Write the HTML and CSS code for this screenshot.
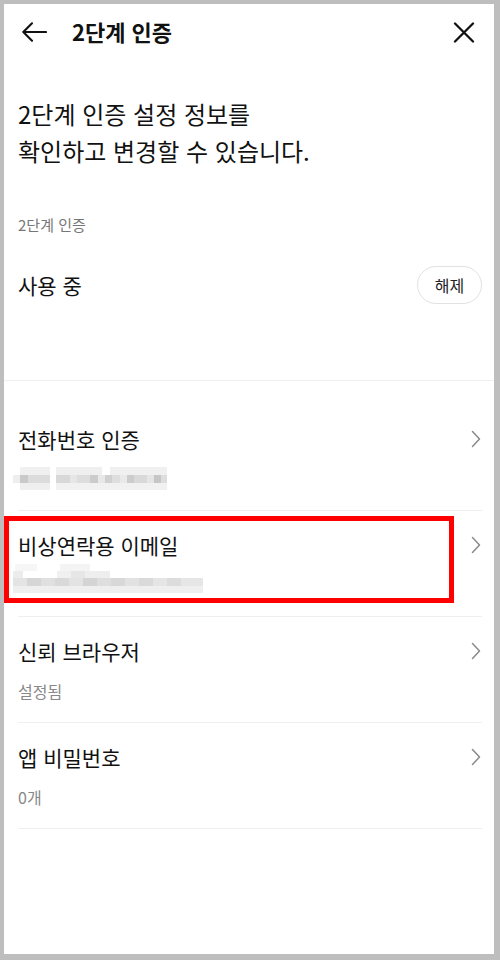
FILE: index.html
```html
<!DOCTYPE html>
<html lang="ko">
<head>
<meta charset="utf-8">
<title>2단계 인증</title>
<link rel="stylesheet" href="styles.css">
</head>
<body>
<div class="screen">
  <header class="topbar">
    <svg class="icon-back" width="26" height="20" viewBox="0 0 26 20" aria-hidden="true">
      <path d="M25 10H2.5M11 1.3L2.3 10L11 18.7" fill="none" stroke="#111" stroke-width="2.1" stroke-linecap="round" stroke-linejoin="round"/>
    </svg>
    <h1 class="topbar-title">2단계 인증</h1>
    <svg class="icon-close" width="22" height="21" viewBox="0 0 22 21" aria-hidden="true">
      <path d="M2 1.5L20 19.5M20 1.5L2 19.5" fill="none" stroke="#111" stroke-width="2.3" stroke-linecap="round"/>
    </svg>
  </header>

  <section class="intro">
    <p class="intro-text">2단계 인증 설정 정보를<br>확인하고 변경할 수 있습니다.</p>
    <div class="label">2단계 인증</div>
    <div class="status-row">
      <span class="status">사용 중</span>
      <button class="pill">해제</button>
    </div>
  </section>

  <div class="divider"></div>

  <ul class="list">
    <li class="item">
      <div class="item-text">
        <div class="item-title">전화번호 인증</div>
        <div class="blur-wrap">
          <svg class="blur blur-phone" width="160" height="24" viewBox="0 0 160 24" aria-hidden="true">
            <rect x="7" y="0" width="30" height="8" fill="#f0f0f0"/>
            <rect x="43" y="0" width="46" height="8" fill="#efefef"/>
            <rect x="97" y="0" width="57" height="8" fill="#f0f0f0"/>
            <rect x="0" y="8" width="7" height="8" fill="#eeeeee"/>
            <rect x="7" y="8" width="8" height="8" fill="#c9c9c9"/>
            <rect x="15" y="8" width="22" height="8" fill="#dcdcdc"/>
            <rect x="43" y="8" width="14" height="8" fill="#d8d8d8"/>
            <rect x="57" y="8" width="7" height="8" fill="#e6e6e6"/>
            <rect x="64" y="8" width="13" height="8" fill="#dddddd"/>
            <rect x="77" y="8" width="8" height="8" fill="#cbcbcb"/>
            <rect x="85" y="8" width="7" height="8" fill="#e8e8e8"/>
            <rect x="92" y="8" width="7" height="8" fill="#d0d0d0"/>
            <rect x="99" y="8" width="8" height="8" fill="#dedede"/>
            <rect x="107" y="8" width="7" height="8" fill="#e9e9e9"/>
            <rect x="114" y="8" width="7" height="8" fill="#cccccc"/>
            <rect x="121" y="8" width="13" height="8" fill="#d9d9d9"/>
            <rect x="134" y="8" width="7" height="8" fill="#e5e5e5"/>
            <rect x="141" y="8" width="7" height="8" fill="#c6c6c6"/>
            <rect x="148" y="8" width="6" height="8" fill="#dddddd"/>
            <rect x="7" y="16" width="30" height="7" fill="#efefef"/>
            <rect x="43" y="16" width="111" height="7" fill="#f1f1f1"/>
          </svg>
        </div>
      </div>
      <svg class="chev" width="10" height="18" viewBox="0 0 10 18" aria-hidden="true"><path d="M1.5 1.5L8.5 9L1.5 16.5" fill="none" stroke="#8a8a8a" stroke-width="1.5" stroke-linecap="round" stroke-linejoin="round"/></svg>
    </li>
    <li class="item">
      <div class="item-text">
        <div class="item-title">비상연락용 이메일</div>
        <div class="blur-wrap">
          <svg class="blur blur-mail" width="194" height="30" viewBox="0 0 194 30" aria-hidden="true">
            <rect x="2" y="0" width="22" height="7" fill="#f6f6f6"/>
            <rect x="47" y="0" width="30" height="7" fill="#f4f4f4"/>
            <rect x="0" y="7" width="10" height="7" fill="#ececec"/>
            <rect x="44" y="7" width="14" height="7" fill="#f0f0f0"/>
            <rect x="58" y="7" width="14" height="7" fill="#e6e6e6"/>
            <rect x="72" y="7" width="25" height="7" fill="#eeeeee"/>
            <rect x="0" y="14" width="14" height="8" fill="#e4e4e4"/>
            <rect x="14" y="14" width="14" height="8" fill="#d6d6d6"/>
            <rect x="28" y="14" width="14" height="8" fill="#e0e0e0"/>
            <rect x="42" y="14" width="14" height="8" fill="#d9d9d9"/>
            <rect x="56" y="14" width="14" height="8" fill="#e3e3e3"/>
            <rect x="70" y="14" width="14" height="8" fill="#d4d4d4"/>
            <rect x="84" y="14" width="14" height="8" fill="#dedede"/>
            <rect x="98" y="14" width="14" height="8" fill="#d8d8d8"/>
            <rect x="112" y="14" width="14" height="8" fill="#e2e2e2"/>
            <rect x="126" y="14" width="14" height="8" fill="#dadada"/>
            <rect x="140" y="14" width="14" height="8" fill="#e5e5e5"/>
            <rect x="154" y="14" width="14" height="8" fill="#dcdcdc"/>
            <rect x="168" y="14" width="22" height="8" fill="#e6e6e6"/>
            <rect x="0" y="22" width="190" height="7" fill="#efefef"/>
          </svg>
        </div>
      </div>
      <svg class="chev" width="10" height="18" viewBox="0 0 10 18" aria-hidden="true"><path d="M1.5 1.5L8.5 9L1.5 16.5" fill="none" stroke="#8a8a8a" stroke-width="1.5" stroke-linecap="round" stroke-linejoin="round"/></svg>
      <div class="highlight"></div>
    </li>
    <li class="item">
      <div class="item-text">
        <div class="item-title">신뢰 브라우저</div>
        <div class="item-sub">설정됨</div>
      </div>
      <svg class="chev" width="10" height="18" viewBox="0 0 10 18" aria-hidden="true"><path d="M1.5 1.5L8.5 9L1.5 16.5" fill="none" stroke="#8a8a8a" stroke-width="1.5" stroke-linecap="round" stroke-linejoin="round"/></svg>
    </li>
    <li class="item">
      <div class="item-text">
        <div class="item-title">앱 비밀번호</div>
        <div class="item-sub">0개</div>
      </div>
      <svg class="chev" width="10" height="18" viewBox="0 0 10 18" aria-hidden="true"><path d="M1.5 1.5L8.5 9L1.5 16.5" fill="none" stroke="#8a8a8a" stroke-width="1.5" stroke-linecap="round" stroke-linejoin="round"/></svg>
    </li>
  </ul>
</div>
</body>
</html>
```

FILE: styles.css
```css
* { box-sizing: border-box; }

html, body {
  margin: 0;
  padding: 0;
  background: #bebebe;
}

body {
  font-family: "Noto Sans CJK KR", "Noto Sans", sans-serif;
  color: #111;
  width: 500px;
  height: 960px;
  overflow: hidden;
}

.screen {
  margin: 4px 0 0 4px;
  width: 490px;
  height: 950px;
  background: #fff;
}

/* header */
.topbar {
  height: 56px;
  display: flex;
  align-items: center;
  padding: 0 19px 0 17px;
}

.icon-back { flex: none; display: block; }

.topbar-title {
  margin: 0 0 0 25px;
  padding-bottom: 2px;
  flex: 1;
  font-size: 22px;
  font-weight: 700;
  line-height: 30px;
  color: #111;
}

.icon-close { flex: none; display: block; }

/* intro */
.intro {
  padding: 0 12px 0 14px;
}

.intro-text {
  margin: 35px 0 0;
  font-size: 24px;
  line-height: 37px;
  color: #111;
}

.label {
  margin-top: 46px;
  font-size: 15px;
  line-height: 20px;
  color: #777;
}

.status-row {
  margin-top: 31px;
  height: 38px;
  display: flex;
  align-items: center;
  justify-content: space-between;
}

.status {
  font-size: 21px;
  line-height: 30px;
  color: #111;
}

.pill {
  width: 65px;
  height: 38px;
  border: 1px solid #e2e2e2;
  border-radius: 19px;
  background: #fff;
  font-family: inherit;
  font-size: 16px;
  color: #222;
  padding: 0;
}

.divider {
  margin-top: 76px;
  height: 1px;
  background: #efefef;
}

/* list */
.list {
  list-style: none;
  margin: 0;
  padding: 24px 12px 0 14px;
}

.item {
  position: relative;
  display: flex;
  align-items: flex-start;
  justify-content: space-between;
  padding: 19px 0 20px;
  border-bottom: 1px solid #efefef;
}

.item-text { flex: 1; }

.item-title {
  font-size: 21px;
  line-height: 30px;
  color: #111;
}

.item-sub {
  margin-top: 14px;
  font-size: 16px;
  line-height: 22px;
  color: #888;
}

.blur-wrap {
  display: flow-root;
  margin-top: 14px;
  height: 22px;
}

.blur { display: block; }

.blur-phone { margin: -1px 0 0 -5px; }

.blur-mail { margin: -10px 0 0 -5px; }

.chev {
  flex: none;
  display: block;
  margin: 6px 1px 0 0;
}

.highlight {
  position: absolute;
  top: 5px;
  left: -14px;
  width: 450px;
  height: 87px;
  border: 5px solid #ff0000;
  pointer-events: none;
}
```
